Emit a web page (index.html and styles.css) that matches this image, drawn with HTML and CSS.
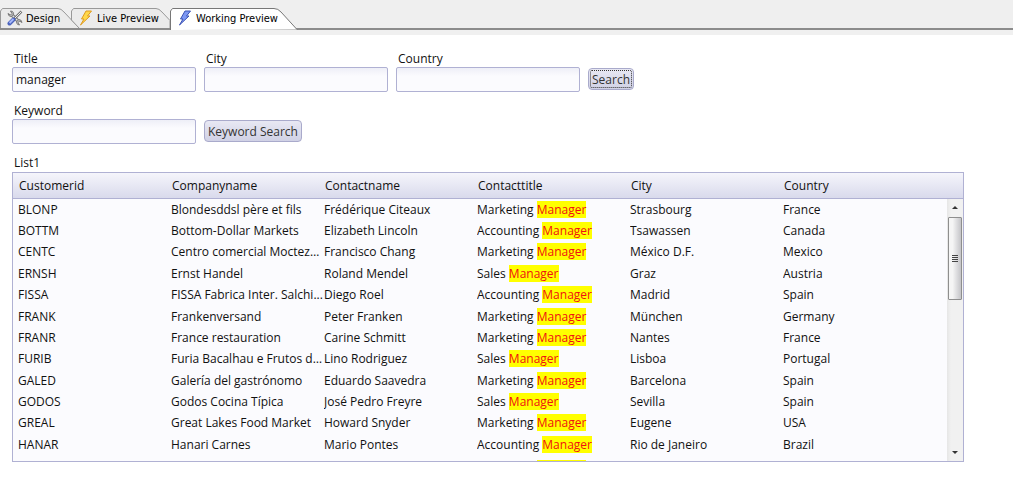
FILE: index.html
```html
<!DOCTYPE html>
<html lang="en">
<head>
  <meta charset="UTF-8" />
  <meta name="viewport" content="width=device-width, initial-scale=1" />
  <title>Working Preview</title>
  <link rel="stylesheet" href="styles.css">
</head>
<body>

<!-- Tabs -->
<nav class="tabs">
  <a class="tab tab-design" href="#design">
    <svg class="tab-shape" viewBox="0 0 86 20"><path d="M.5 20V3L2.500.5H58Q61 .5 64 4L79 20" /></svg>
    <svg class="icon" viewBox="0 0 16 16">
      <path d="M4.500 4.500L12 12" stroke="#777" stroke-width="3.500" />
      <path d="M4.500 4.500L12 12" stroke="#e2e2e2" stroke-width="1.500" />
      <path d="M1 3.500L3.500 5L5 3.500L3.500 1Q6 .8 6.500 3.200Q6.500 6 4 6.500Q1.300 6.300 1 3.500ZM15 12.500L12.500 11L11 12.500L12.500 15Q10 15 9.500 12.500Q9.800 10 12 9.600Q14.800 9.800 15 12.500Z" fill="#ccc" stroke="#777" />
      <path d="M14.500 1.500L7.500 8.500" stroke="#777" stroke-width="2.500" />
      <path d="M14.200 1.800L8 8" stroke="#eee" />
      <path d="M6.500 9.500L2.500 13.500" stroke="#4a63bd" stroke-width="4" stroke-linecap="round" />
      <path d="M6.500 9L2.500 13" stroke="#a5b6f8" stroke-width="2" />
    </svg>
    Design
  </a>
  <a class="tab tab-live" href="#live">
    <svg class="tab-shape" viewBox="0 0 99 20"><path d="M8 20L.5 12V3L2.500.5H85Q88 .5 91 4L99 12.500V20" /></svg>
    <svg class="icon" viewBox="0 0 16 16"><path d="M8 1H13.500L9.500 6H12L2.500 15L6 9H3.500Z" fill="#ffd84a" stroke="#de9a20" /></svg>
    Live Preview
  </a>
  <a class="tab tab-working" href="#working">
    <svg class="tab-shape active" viewBox="0 0 128 22"><path d="M.5 22V3L2.500.5H104Q108 .5 111 4L127 21.500" /></svg>
    <svg class="icon" viewBox="0 0 16 16"><path d="M8 1H13.500L9.500 6H12L2.500 15L6 9H3.500Z" fill="#7d98f4" stroke="#3b52b4" /></svg>
    Working Preview
  </a>
</nav>

<main class="page">
  <!-- Search by field -->
  <form class="search-row">
    <div class="field">
      <label for="title">Title</label>
      <input type="text" id="title" value="manager">
    </div>
    <div class="field">
      <label for="city">City</label>
      <input type="text" id="city">
    </div>
    <div class="field">
      <label for="country">Country</label>
      <input type="text" id="country">
    </div>
    <button type="button" class="focused">Search</button>
  </form>

  <!-- Search by keyword -->
  <form class="search-row">
    <div class="field">
      <label for="keyword">Keyword</label>
      <input type="text" id="keyword">
    </div>
    <button type="button">Keyword Search</button>
  </form>

  <!-- Results -->
  <div class="list-title" id="list-title">List1</div>
  <div class="list">
    <table aria-labelledby="list-title">
      <thead>
        <tr><th>Customerid</th><th>Companyname</th><th>Contactname</th><th>Contacttitle</th><th>City</th><th>Country</th></tr>
      </thead>
      <tbody>
        <tr><td>BLONP</td><td>Blondesddsl père et fils</td><td>Frédérique Citeaux</td><td>Marketing <mark>Manager</mark></td><td>Strasbourg</td><td>France</td></tr>
        <tr><td>BOTTM</td><td>Bottom-Dollar Markets</td><td>Elizabeth Lincoln</td><td>Accounting <mark>Manager</mark></td><td>Tsawassen</td><td>Canada</td></tr>
        <tr><td>CENTC</td><td>Centro comercial Moctezu...</td><td>Francisco Chang</td><td>Marketing <mark>Manager</mark></td><td>México D.F.</td><td>Mexico</td></tr>
        <tr><td>ERNSH</td><td>Ernst Handel</td><td>Roland Mendel</td><td>Sales <mark>Manager</mark></td><td>Graz</td><td>Austria</td></tr>
        <tr><td>FISSA</td><td>FISSA Fabrica Inter. Salchi...</td><td>Diego Roel</td><td>Accounting <mark>Manager</mark></td><td>Madrid</td><td>Spain</td></tr>
        <tr><td>FRANK</td><td>Frankenversand</td><td>Peter Franken</td><td>Marketing <mark>Manager</mark></td><td>München</td><td>Germany</td></tr>
        <tr><td>FRANR</td><td>France restauration</td><td>Carine Schmitt</td><td>Marketing <mark>Manager</mark></td><td>Nantes</td><td>France</td></tr>
        <tr><td>FURIB</td><td>Furia Bacalhau e Frutos do...</td><td>Lino Rodriguez</td><td>Sales <mark>Manager</mark></td><td>Lisboa</td><td>Portugal</td></tr>
        <tr><td>GALED</td><td>Galería del gastrónomo</td><td>Eduardo Saavedra</td><td>Marketing <mark>Manager</mark></td><td>Barcelona</td><td>Spain</td></tr>
        <tr><td>GODOS</td><td>Godos Cocina Típica</td><td>José Pedro Freyre</td><td>Sales <mark>Manager</mark></td><td>Sevilla</td><td>Spain</td></tr>
        <tr><td>GREAL</td><td>Great Lakes Food Market</td><td>Howard Snyder</td><td>Marketing <mark>Manager</mark></td><td>Eugene</td><td>USA</td></tr>
        <tr><td>HANAR</td><td>Hanari Carnes</td><td>Mario Pontes</td><td>Accounting <mark>Manager</mark></td><td>Rio de Janeiro</td><td>Brazil</td></tr>
        <tr><td></td><td></td><td></td><td>Marketing <mark>Manager</mark></td><td></td><td></td></tr>
      </tbody>
    </table>
    <div class="scrollbar">
      <span class="arrow up"></span>
      <span class="thumb"><i></i><i></i><i></i><i></i></span>
      <span class="arrow down"></span>
    </div>
  </div>
</main>

</body>
</html>
```
FILE: styles.css
```css
body {
  margin: 0;
  background: #fff;
  color: #111;
  font-family: "Open Sans", sans-serif;
  font-size: 12px;
}

/* tabs */
.tabs {
  display: flex;
  align-items: flex-end;
  height: 28px;
  background: #efefef;
  border-bottom: 2px solid #8c8c8c;
  box-shadow: 0 5px 0 #f0f0f0;
}
.tab {
  position: relative;
  display: flex;
  align-items: center;
  gap: 3px;
  height: 20px;
  padding-left: 7px;
  box-sizing: border-box;
  isolation: isolate;
  color: #000;
  font-family: "DejaVu Sans Condensed", "DejaVu Sans", sans-serif;
  font-size: 11px;
  text-decoration: none;
  white-space: nowrap;
}
.tab-design {
  width: 71px;
}
.tab-live {
  width: 99px;
}
.tab-working {
  width: 128px;
}
.tab-shape {
  position: absolute;
  left: 0;
  bottom: 0;
  z-index: -1;
  width: 100%;
  height: 20px;
  fill: #ebebeb;
  stroke: #999;
}
.tab-design .tab-shape {
  width: 86px;
}
.tab-shape.active {
  bottom: -2px;
  height: 22px;
  fill: #fff;
  stroke: #777;
}
.icon {
  width: 16px;
  height: 16px;
  fill: none;
}

/* search forms */
.page {
  padding: 19px 49px 0 12px;
}
.search-row {
  display: flex;
  align-items: flex-end;
  gap: 8px;
  margin-bottom: 9px;
}
.field {
  width: 184px;
}
.field label,
.list-title {
  display: block;
  padding: 2px 2px 0;
  line-height: 16px;
}
.list-title {
  padding-bottom: 1px;
}
.field input {
  display: block;
  width: 100%;
  height: 25px;
  box-sizing: border-box;
  padding: 0 3px;
  border: 1px solid #b0b1d3;
  border-radius: 2px;
  background: linear-gradient(#eeeff7, #fbfbfe 8px);
  color: #111;
  font: inherit;
}
button {
  height: 22px;
  margin-bottom: 2px;
  padding: 0 3px;
  border: 1px solid #a9aacb;
  border-radius: 4px;
  background: linear-gradient(#e8e8f3, #d0d1e5);
  color: #333;
  font: inherit;
}
button.focused {
  outline: 1px dotted #333;
  outline-offset: -3px;
}

/* result list */
.list {
  position: relative;
  height: 288px;
  overflow: hidden;
  border: 1px solid #b0b1d3;
  background: #fbfbfe;
}
table {
  width: 100%;
  height: 304px;
  table-layout: fixed;
  border-collapse: separate;
  border-spacing: 0;
}
th,
td {
  padding: 0;
  overflow: hidden;
  text-align: left;
  text-overflow: ellipsis;
  white-space: nowrap;
  line-height: 16px;
}
td:first-child {
  padding-left: 5px;
}
th {
  width: 152px;
  height: 25px;
  padding-left: 1px;
  border-bottom: 1px solid #b0b1d3;
  background: linear-gradient(#f5f5fb, #d9daec);
  font-weight: normal;
}
th:first-child {
  padding-left: 6px;
}
th:last-child {
  width: auto;
}
tbody tr:last-child td {
  vertical-align: bottom;
}
mark {
  background: #ff0;
  color: #f01010;
}

/* scrollbar */
.scrollbar {
  position: absolute;
  top: 26px;
  right: 0;
  bottom: 0;
  display: flex;
  flex-direction: column;
  align-items: center;
  width: 16px;
  background: linear-gradient(to right, #e6e6e6, #f1f1f1 4px);
}
.arrow {
  border: 3px solid transparent;
}
.up {
  margin: 4px 0 8px;
  border-bottom-color: #333;
}
.down {
  margin: auto 0 4px;
  border-top-color: #333;
}
.thumb {
  display: flex;
  flex-direction: column;
  align-items: center;
  justify-content: center;
  gap: 1px;
  width: 14px;
  height: 83px;
  box-sizing: border-box;
  border: 1px solid #8e8e8e;
  border-radius: 1px;
  background: linear-gradient(to right, #f5f5f5 30%, #c4c4c8);
}
.thumb i {
  width: 6px;
  height: 1px;
  background: #444;
}
```
